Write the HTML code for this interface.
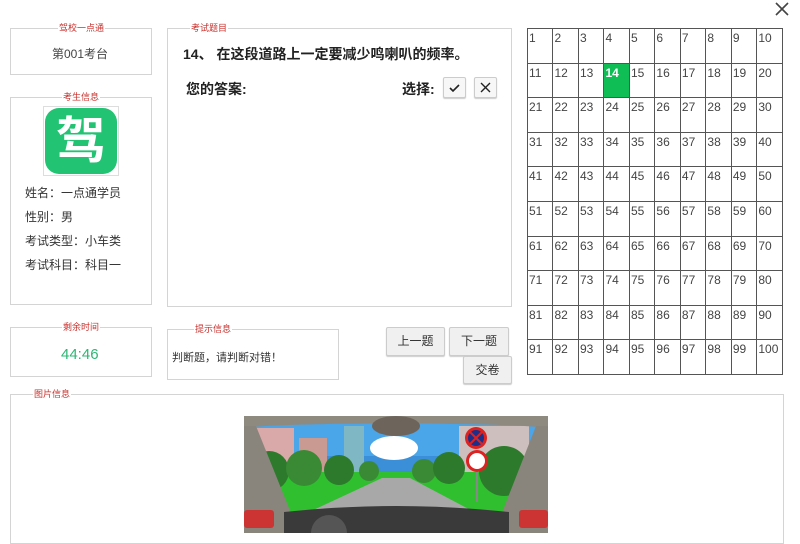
<!DOCTYPE html>
<html><head><meta charset="utf-8"><style>
*{margin:0;padding:0;box-sizing:border-box}
body{width:800px;height:533px;overflow:hidden;background:#fff;font-family:"Liberation Sans","Noto Sans CJK SC",sans-serif;color:#333;position:relative}
.box{position:absolute;border:1px solid #d4d4d4}
.lg{position:absolute;top:-7px;font-size:9px;color:#c9302c;background:#fff;padding:0 1px;line-height:12px;white-space:nowrap}
.t{position:absolute;white-space:nowrap}
.btn{position:absolute;border:1px solid #ccc;background:#f0f0f0;border-radius:2px;font-size:12px;text-align:center;color:#333;box-shadow:0 1px 1px #ccc}
.grid{position:absolute;left:527px;top:28px;width:256px;height:346px;border-collapse:collapse}
.grid td{border:1.5px solid #555;width:25.6px;height:34.6px;vertical-align:top;font-size:12px;color:#444;padding:2px 0 0 1px;font-family:"Liberation Sans",sans-serif}
.grid td.on{background:#0fbf55;color:#fff;font-weight:bold}
</style></head><body>
<svg style="position:absolute;left:774px;top:1px" width="16" height="16"><path d="M2 2L14 14M14 2L2 14" stroke="#444" stroke-width="1.6"/></svg>

<div class="box" style="left:10px;top:28px;width:142px;height:47px"><span class="lg" style="left:47px">驾校一点通</span>
<span class="t" style="left:41px;top:16px;font-size:12px;color:#444">第001考台</span></div>

<div class="box" style="left:10px;top:97px;width:142px;height:208px"><span class="lg" style="left:51px">考生信息</span>
<div style="position:absolute;left:32px;top:8px;width:76px;height:70px;border:1px solid #ddd;padding:1px">
<div style="width:72px;height:66px;background:#22c373;border-radius:14px;color:#fff;font-size:50px;font-weight:bold;text-align:center;line-height:66px">驾</div></div>
<span class="t" style="left:14px;top:86px;font-size:12px">姓名：一点通学员</span>
<span class="t" style="left:14px;top:110px;font-size:12px">性别：男</span>
<span class="t" style="left:14px;top:134px;font-size:12px">考试类型：小车类</span>
<span class="t" style="left:14px;top:158px;font-size:12px">考试科目：科目一</span>
</div>

<div class="box" style="left:167px;top:28px;width:345px;height:279px"><span class="lg" style="left:22px">考试题目</span>
<span class="t" style="left:15px;top:15px;font-size:14px;font-weight:bold;color:#222">14、 在这段道路上一定要减少鸣喇叭的频率。</span>
<span class="t" style="left:18px;top:50px;font-size:14px;font-weight:bold;color:#222">您的答案:</span>
<span class="t" style="left:234px;top:50px;font-size:14px;font-weight:bold;color:#222">选择:</span>
<div class="btn" style="left:275px;top:48px;width:23px;height:21px;background:#f7f7f7"><svg width="21" height="19"><path d="M6 10l3 3 6-6" fill="none" stroke="#222" stroke-width="1.6"/></svg></div>
<div class="btn" style="left:306px;top:48px;width:23px;height:21px;background:#f7f7f7"><svg width="21" height="19"><path d="M6 5l9 9M15 5l-9 9" stroke="#222" stroke-width="1.4"/></svg></div>
</div>

<div class="box" style="left:10px;top:327px;width:142px;height:50px"><span class="lg" style="left:51px">剩余时间</span>
<span class="t" style="left:50px;top:18px;font-size:15px;color:#2bb673">44:46</span></div>

<div class="box" style="left:167px;top:329px;width:172px;height:51px"><span class="lg" style="left:26px">提示信息</span>
<span class="t" style="left:4px;top:19px;font-size:11px;color:#333">判断题，请判断对错！</span></div>

<div class="btn" style="left:386px;top:327px;width:59px;height:29px;line-height:27px">上一题</div>
<div class="btn" style="left:449px;top:327px;width:60px;height:29px;line-height:27px">下一题</div>
<div class="btn" style="left:463px;top:356px;width:49px;height:28px;line-height:26px">交卷</div>

<table class="grid">
<tr><td>1</td><td>2</td><td>3</td><td>4</td><td>5</td><td>6</td><td>7</td><td>8</td><td>9</td><td>10</td></tr>
<tr><td>11</td><td>12</td><td>13</td><td class="on">14</td><td>15</td><td>16</td><td>17</td><td>18</td><td>19</td><td>20</td></tr>
<tr><td>21</td><td>22</td><td>23</td><td>24</td><td>25</td><td>26</td><td>27</td><td>28</td><td>29</td><td>30</td></tr>
<tr><td>31</td><td>32</td><td>33</td><td>34</td><td>35</td><td>36</td><td>37</td><td>38</td><td>39</td><td>40</td></tr>
<tr><td>41</td><td>42</td><td>43</td><td>44</td><td>45</td><td>46</td><td>47</td><td>48</td><td>49</td><td>50</td></tr>
<tr><td>51</td><td>52</td><td>53</td><td>54</td><td>55</td><td>56</td><td>57</td><td>58</td><td>59</td><td>60</td></tr>
<tr><td>61</td><td>62</td><td>63</td><td>64</td><td>65</td><td>66</td><td>67</td><td>68</td><td>69</td><td>70</td></tr>
<tr><td>71</td><td>72</td><td>73</td><td>74</td><td>75</td><td>76</td><td>77</td><td>78</td><td>79</td><td>80</td></tr>
<tr><td>81</td><td>82</td><td>83</td><td>84</td><td>85</td><td>86</td><td>87</td><td>88</td><td>89</td><td>90</td></tr>
<tr><td>91</td><td>92</td><td>93</td><td>94</td><td>95</td><td>96</td><td>97</td><td>98</td><td>99</td><td>100</td></tr>
</table>

<div class="box" style="left:10px;top:394px;width:774px;height:150px"><span class="lg" style="left:22px">图片信息</span></div>

<svg style="position:absolute;left:244px;top:416px" width="304" height="117" viewBox="0 0 304 117">
<rect width="304" height="117" fill="#3a8fd8"/>
<rect x="0" y="0" width="304" height="40" fill="#4aa6e8"/>
<rect x="10" y="12" width="40" height="60" fill="#d9a8a8"/>
<rect x="55" y="22" width="28" height="50" fill="#c99a92"/>
<rect x="100" y="10" width="20" height="60" fill="#7fb7c4"/>
<rect x="215" y="10" width="70" height="60" fill="#cdbfbd"/>
<ellipse cx="150" cy="32" rx="24" ry="12" fill="#fff"/>
<rect x="0" y="56" width="304" height="40" fill="#2fbf2f"/>
<circle cx="25" cy="55" r="20" fill="#2d7a2d"/><circle cx="60" cy="52" r="18" fill="#3a8a35"/><circle cx="95" cy="54" r="15" fill="#2d7a2d"/><circle cx="125" cy="55" r="10" fill="#3a8a35"/>
<circle cx="180" cy="55" r="12" fill="#3a8a35"/><circle cx="205" cy="52" r="16" fill="#2d7a2d"/><circle cx="260" cy="55" r="25" fill="#2d7a2d"/>
<path d="M138 62L166 62L270 117L20 117Z" fill="#a8a8a8"/>
<circle cx="232" cy="22" r="11" fill="#d22"/><circle cx="232" cy="22" r="8" fill="#1e2f8a"/><path d="M226 16l12 12M238 16l-12 12" stroke="#d22" stroke-width="2"/>
<circle cx="233" cy="45" r="11" fill="#d22"/><circle cx="233" cy="45" r="8" fill="#fff"/><rect x="232" y="56" width="2" height="30" fill="#888"/>
<path d="M0 0H304V12C260 6 40 6 0 12Z" fill="#8f8a80"/>
<ellipse cx="152" cy="10" rx="24" ry="10" fill="#6d655c"/>
<path d="M0 10L12 10L55 117H0Z" fill="#8a857c"/><path d="M304 10L292 10L250 117H304Z" fill="#8a857c"/>
<path d="M40 96Q152 84 265 96V117H40Z" fill="#3a3a3a"/>
<rect x="0" y="94" width="30" height="18" rx="3" fill="#c33"/><rect x="275" y="94" width="29" height="18" rx="3" fill="#c33"/>
<circle cx="85" cy="117" r="18" fill="#555"/>
</svg>
</body></html>
